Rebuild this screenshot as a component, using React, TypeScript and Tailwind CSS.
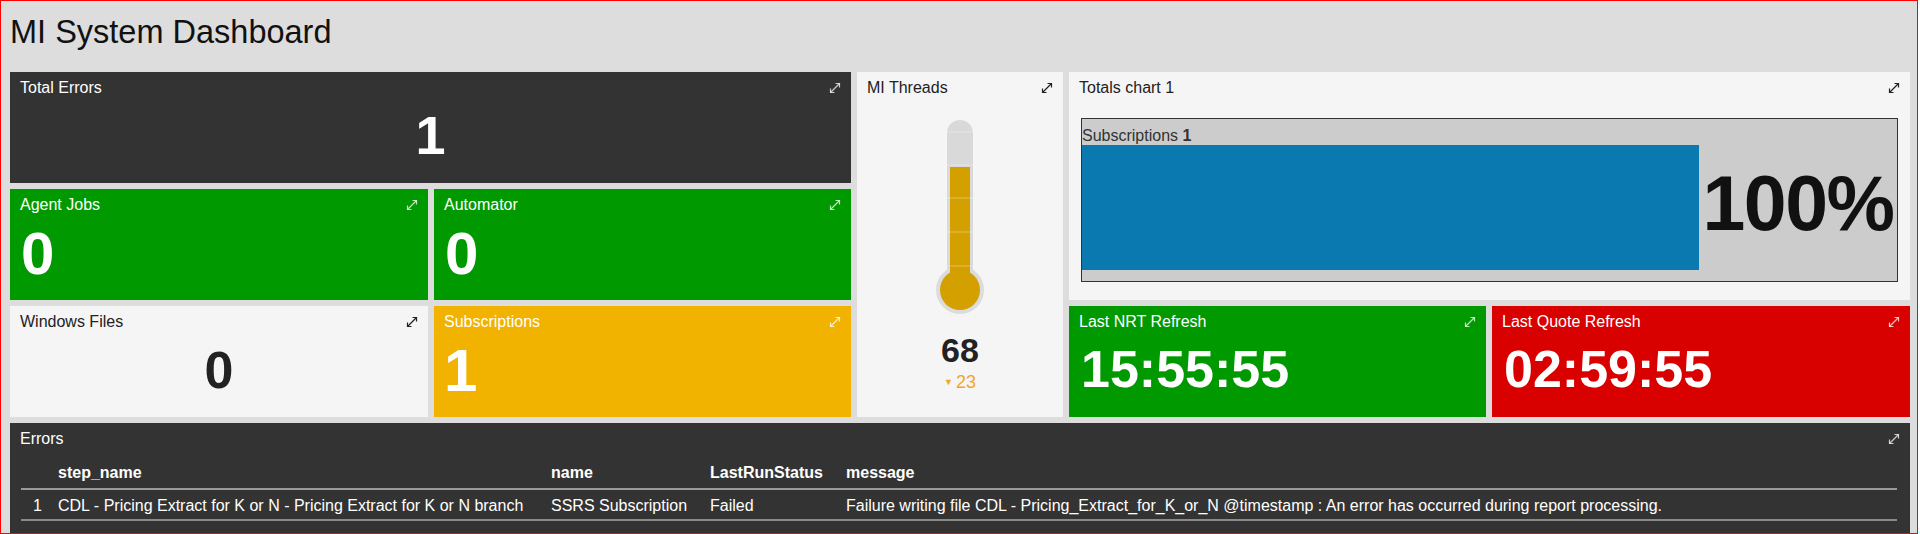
import type { ReactNode } from 'react'

type Tone = 'dark' | 'green' | 'light' | 'amber' | 'red'

const toneClass: Record<Tone, string> = {
  dark: 'bg-[#333333] text-white',
  green: 'bg-[#009900] text-white',
  light: 'bg-[#f5f5f5] text-[#222222]',
  amber: 'bg-[#f2b200] text-white',
  red: 'bg-[#d90000] text-white',
}

const iconClass: Record<Tone, string> = {
  dark: 'text-white/75',
  green: 'text-white/75',
  light: 'text-[#222222]',
  amber: 'text-white/75',
  red: 'text-white/75',
}

function ExpandIcon({ className }: { className: string }) {
  return (
    <svg
      width="12"
      height="12"
      viewBox="0 0 12 12"
      fill="none"
      stroke="currentColor"
      strokeWidth="1.2"
      className={`absolute top-[10px] right-[10px] ${className}`}
    >
      <path d="M1.5 10.5 10.5 1.5" />
      <path d="M6.5 1.5H10.5V5.5" />
      <path d="M1.5 6.5V10.5H5.5" />
    </svg>
  )
}

function Tile({ title, tone, className, children }: { title: string; tone: Tone; className: string; children?: ReactNode }) {
  return (
    <div className={`relative overflow-hidden px-[10px] pt-[8px] ${toneClass[tone]} ${className}`}>
      <div className="text-[16px] leading-none h-[16px] whitespace-nowrap">{title}</div>
      <ExpandIcon className={iconClass[tone]} />
      {children}
    </div>
  )
}

function Thermometer() {
  const ticks = [16, 49, 82, 116, 150]
  return (
    <svg width="60" height="200" viewBox="0 0 60 200" className="mx-auto mt-[20px] block">
      <rect x="17" y="4" width="26" height="172" rx="13" fill="#d9d9d9" />
      <circle cx="30" cy="174" r="24" fill="#dcdcdc" />
      <rect x="20" y="51" width="20" height="123" fill="#d4a000" />
      <circle cx="30" cy="174" r="20" fill="#d4a000" />
      {ticks.map((t) => (
        <line key={t} x1="17" x2="43" y1={t} y2={t} stroke="#ffffff" strokeOpacity="0.35" strokeWidth="1" />
      ))}
    </svg>
  )
}

export default function App() {
  return (
    <div className="w-[1918px] h-[534px] overflow-hidden border border-[#ff0000] bg-[#dddddd] pl-[9px] pr-[6px] pt-[15px] font-['Liberation_Sans',Arial,sans-serif]">
      <h1 className="text-[32.5px] leading-none h-[32px] mb-[24px] text-[#111111] font-normal">MI System Dashboard</h1>

      <div className="grid grid-cols-[418px_417px_206px_417px_418px] grid-rows-[111px_111px_111px_110px] gap-[6px]">
        <Tile title="Total Errors" tone="dark" className="col-start-1 col-span-2 row-start-1">
          <div className="mt-[12px] text-center text-[54px] leading-none font-bold">1</div>
        </Tile>

        <Tile title="Agent Jobs" tone="green" className="col-start-1 row-start-2">
          <div className="mt-[11px] ml-[1px] text-[60px] leading-none font-bold">0</div>
        </Tile>
        <Tile title="Automator" tone="green" className="col-start-2 row-start-2">
          <div className="mt-[11px] ml-[1px] text-[60px] leading-none font-bold">0</div>
        </Tile>

        <Tile title="Windows Files" tone="light" className="col-start-1 row-start-3">
          <div className="mt-[14px] text-center text-[52px] leading-none font-bold">0</div>
        </Tile>
        <Tile title="Subscriptions" tone="amber" className="col-start-2 row-start-3">
          <div className="mt-[11px] text-[60px] leading-none font-bold">1</div>
        </Tile>

        {/* MI Threads gauge */}
        <Tile title="MI Threads" tone="light" className="col-start-3 row-start-1 row-span-3">
          <Thermometer />
          <div className="mt-[17px] text-center text-[34px] leading-none font-bold text-[#222222]">68</div>
          <div className="mt-[6px] flex items-center justify-center gap-[3px] text-[18px] leading-none text-[#f2a623]">
            <span className="text-[9px]">▼</span>
            <span>23</span>
          </div>
        </Tile>

        {/* Totals chart */}
        <Tile title="Totals chart 1" tone="light" className="col-start-4 col-span-2 row-start-1 row-span-2">
          <div className="mt-[22px] mx-[2px] h-[164px] border border-[#333333] bg-[#cccccc] pt-[9px]">
            <div className="text-[16px] leading-none h-[16px] text-[#333333]">
              Subscriptions <span className="font-bold">1</span>
            </div>
            <div className="mt-[1px] flex">
              <div className="w-[617px] h-[125px] bg-[#0979b0]" />
              <div className="flex-1 text-center">
                <div className="mt-[20px] text-[77px] leading-none font-bold tracking-[-1.5px] text-[#111111]">100%</div>
              </div>
            </div>
          </div>
        </Tile>

        <Tile title="Last NRT Refresh" tone="green" className="col-start-4 row-start-3">
          <div className="mt-[13px] ml-[2px] text-[52px] leading-none font-bold">15:55:55</div>
        </Tile>
        <Tile title="Last Quote Refresh" tone="red" className="col-start-5 row-start-3">
          <div className="mt-[13px] ml-[2px] text-[52px] leading-none font-bold">02:59:55</div>
        </Tile>

        {/* Errors table */}
        <Tile title="Errors" tone="dark" className="col-start-1 col-span-5 row-start-4">
          <table className="mt-[10px] ml-[1px] w-[1876px] table-fixed border-collapse text-[16px] leading-none">
            <colgroup>
              <col className="w-[29px]" />
              <col className="w-[493px]" />
              <col className="w-[159px]" />
              <col className="w-[136px]" />
              <col />
            </colgroup>
            <thead>
              <tr className="border-b-2 border-[#9a9a9a]">
                <th className="px-[8px] pt-[8px] pb-[7px]" />
                <th className="px-[8px] pt-[8px] pb-[7px] text-left font-bold">step_name</th>
                <th className="px-[8px] pt-[8px] pb-[7px] text-left font-bold">name</th>
                <th className="px-[8px] pt-[8px] pb-[7px] text-left font-bold">LastRunStatus</th>
                <th className="px-[8px] pt-[8px] pb-[7px] text-left font-bold">message</th>
              </tr>
            </thead>
            <tbody>
              <tr className="border-b-2 border-[#8a8a8a]">
                <td className="px-[8px] pt-[8px] pb-[5px] text-right">1</td>
                <td className="px-[8px] pt-[8px] pb-[5px] whitespace-nowrap">CDL - Pricing Extract for K or N - Pricing Extract for K or N branch</td>
                <td className="px-[8px] pt-[8px] pb-[5px] whitespace-nowrap">SSRS Subscription</td>
                <td className="px-[8px] pt-[8px] pb-[5px]">Failed</td>
                <td className="px-[8px] pt-[8px] pb-[5px] whitespace-nowrap">
                  Failure writing file CDL - Pricing_Extract_for_K_or_N @timestamp : An error has occurred during report processing.
                </td>
              </tr>
            </tbody>
          </table>
        </Tile>
      </div>
    </div>
  )
}
